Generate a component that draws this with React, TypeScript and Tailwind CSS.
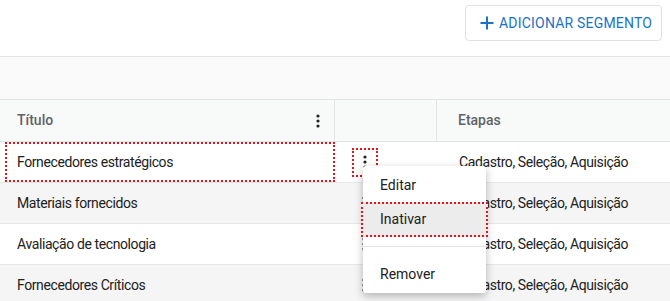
import React from "react";

const Kebab = ({ className = "" }: { className?: string }) => (
  <svg width="4" height="14" viewBox="0 0 4 14" className={className}>
    <circle cx="2" cy="2" r="1.6" fill="#222" />
    <circle cx="2" cy="7" r="1.6" fill="#222" />
    <circle cx="2" cy="12" r="1.6" fill="#222" />
  </svg>
);

const rows = [
  "Fornecedores estratégicos",
  "Materiais fornecidos",
  "Avaliação de tecnologia",
  "Fornecedores Críticos",
];

export default function App() {
  return (
    <div className="w-[670px] h-[301px] overflow-hidden bg-white font-['Roboto',sans-serif] text-[14px] text-[#212121] relative">
      <div className="h-[57px] flex justify-end items-start pt-[5px] pr-[8px] border-b border-[#e4e4e4]">
        <button className="h-[36px] w-[197px] rounded-[4px] border border-[#dfe1e5] flex items-center pl-[13px] gap-[4px] text-[#1a73c8] text-[14px] tracking-[0.2px]">
          <svg width="16" height="16" viewBox="0 0 16 16">
            <path d="M8 1.5v13M1.5 8h13" stroke="#1a73c8" strokeWidth="2" />
          </svg>
          <span>ADICIONAR SEGMENTO</span>
        </button>
      </div>
      <div className="h-[43px] bg-[#fafafa] border-b border-[#e4e4e4]" />
      <div className="relative">
        <div className="grid grid-cols-[335px_102px_1fr] h-[42px] bg-[#f8f9f9] border-b border-[#e4e4e4] text-[#5f6368] font-medium">
          <div className="flex items-center justify-between pl-[17px] pr-[14px] border-r border-[#e4e4e4]">
            <span>Título</span>
            <Kebab />
          </div>
          <div className="border-r border-[#e4e4e4]" />
          <div className="flex items-center pl-[21px]">Etapas</div>
        </div>
        {rows.map((r, i) => (
          <div
            key={r}
            className={`grid grid-cols-[335px_102px_1fr] h-[41px] border-b border-[#e6e6e6] text-[14px] tracking-[-0.4px] ${i % 2 === 1 ? "bg-[#f5f5f5]" : "bg-white"}`}
          >
            <div className="flex items-center pl-[17px]">
              {i === 0 ? (
                <div className="ml-[-12px] w-[331px] h-[40px] border-2 border-dotted border-[#e2141e] flex items-center pl-[10px]">
                  {r}
                </div>
              ) : (
                r
              )}
            </div>
            <div className="flex items-center pl-[27px]">
              {i === 0 ? (
                <div className="ml-[-10px] w-[26px] h-[29px] border-2 border-dotted border-[#e2141e] flex items-center justify-center">
                  <Kebab />
                </div>
              ) : (
                <Kebab />
              )}
            </div>
            <div className="flex items-center pl-[22px]">Cadastro, Seleção, Aquisição</div>
          </div>
        ))}
        <div className="absolute left-[363px] top-[66px] w-[123px] bg-white rounded-[3px] shadow-[0_3px_8px_rgba(0,0,0,0.28)] pt-[2px] pb-[1px]">
          <div className="h-[34px] flex items-center pl-[17px]">Editar</div>
          <div className="ml-[-2px] mr-[-2px] h-[35px] bg-[#ececec] border-2 border-dotted border-[#e2141e] flex items-center pl-[17px]">
            Inativar
          </div>
          <div className="h-[10px] border-b border-[#e4e4e4]" />
          <div className="h-[45px] flex items-center pl-[17px] pt-[10px]">Remover</div>
        </div>
      </div>
    </div>
  );
}
